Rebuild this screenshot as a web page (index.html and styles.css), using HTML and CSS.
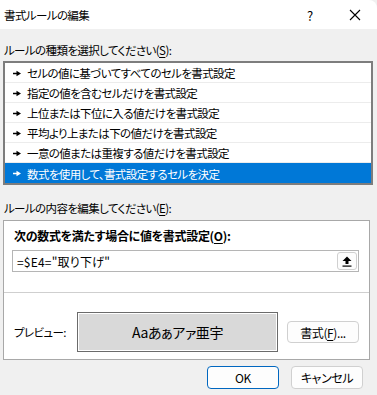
FILE: index.html
```html
<!DOCTYPE html>
<html lang="ja">

<head>
  <meta charset="UTF-8">
  <meta name="viewport" content="width=device-width, initial-scale=1.0">
  <title>書式ルールの編集</title>
  <link rel="stylesheet" href="styles.css">
</head>

<body>
  <div class="window">
    <div class="titlebar">
      <span class="title">書式ルールの編集</span>
      <span class="help">?</span>
      <span class="close">
        <svg width="12" height="12" viewBox="0 0 12 12">
          <path d="M1 1L11 11M11 1L1 11" stroke="#000" stroke-width="1.1" fill="none" />
        </svg>
      </span>
    </div>

    <div class="body">
      <div class="section-label">ルールの種類を選択してください(<u>S</u>):</div>

      <div class="listbox">
        <div class="rule">
          <svg class="arrow" width="8" height="7" viewBox="0 0 8 7"><path d="M0 2.7h3.5V0.7L8 3.5L3.5 6.3V4.3H0z" /></svg>
          セルの値に基づいてすべてのセルを書式設定
        </div>
        <div class="rule">
          <svg class="arrow" width="8" height="7" viewBox="0 0 8 7"><path d="M0 2.7h3.5V0.7L8 3.5L3.5 6.3V4.3H0z" /></svg>
          指定の値を含むセルだけを書式設定
        </div>
        <div class="rule">
          <svg class="arrow" width="8" height="7" viewBox="0 0 8 7"><path d="M0 2.7h3.5V0.7L8 3.5L3.5 6.3V4.3H0z" /></svg>
          上位または下位に入る値だけを書式設定
        </div>
        <div class="rule">
          <svg class="arrow" width="8" height="7" viewBox="0 0 8 7"><path d="M0 2.7h3.5V0.7L8 3.5L3.5 6.3V4.3H0z" /></svg>
          平均より上または下の値だけを書式設定
        </div>
        <div class="rule">
          <svg class="arrow" width="8" height="7" viewBox="0 0 8 7"><path d="M0 2.7h3.5V0.7L8 3.5L3.5 6.3V4.3H0z" /></svg>
          一意の値または重複する値だけを書式設定
        </div>
        <div class="rule selected">
          <svg class="arrow" width="8" height="7" viewBox="0 0 8 7"><path d="M0 2.7h3.5V0.7L8 3.5L3.5 6.3V4.3H0z" /></svg>
          数式を使用して、書式設定するセルを決定
        </div>
      </div>

      <div class="section-label second">ルールの内容を編集してください(<u>E</u>):</div>

      <div class="editbox">
        <div class="formula-area">
          <div class="formula-label">次の数式を満たす場合に値を書式設定(<u>O</u>):</div>
          <div class="formula-input">
            <span class="formula-text">=$E4="取り下げ"</span>
            <span class="collapse-btn">
              <svg width="10" height="11" viewBox="0 0 10 11">
                <path d="M5 0.5L9.5 5H6.5V8H3.5V5H0.5z" fill="#000" />
                <rect x="0.5" y="9.5" width="9" height="1.2" fill="#000" />
              </svg>
            </span>
          </div>
        </div>

        <div class="preview-row">
          <span class="preview-label">プレビュー:</span>
          <div class="preview-box">
            <div class="preview-inner">Aaあぁアァ亜宇</div>
          </div>
          <button class="btn format-btn">書式(<u>F</u>)...</button>
        </div>
      </div>

      <div class="footer">
        <button class="btn ok">OK</button>
        <button class="btn">キャンセル</button>
      </div>
    </div>
  </div>
</body>

</html>
```

FILE: styles.css
```css
body {
  margin: 0;
  font-family: "Noto Sans CJK JP", "Noto Sans", sans-serif;
  font-size: 11.5px;
  letter-spacing: -0.6px;
  font-feature-settings: "palt";
  color: #000;
  background-color: #f0f0f0;
}

.window {
  width: 377px;
  height: 395px;
  display: flex;
  flex-direction: column;
  overflow: hidden;
}

.titlebar {
  height: 29px;
  background-color: #ffffff;
  display: flex;
  align-items: center;
  padding-left: 4px;
  padding-top: 1px;
  box-sizing: border-box;
  border-top-right-radius: 8px;
}

.title {
  flex: 1;
}

.help {
  width: 14px;
  text-align: center;
  font-size: 13px;
  letter-spacing: 0;
  margin-right: 32px;
}

.close {
  display: flex;
  width: 12px;
  margin-right: 16px;
}

.body {
  flex: 1;
  padding: 0 4px 0 3px;
  display: flex;
  flex-direction: column;
}

.section-label {
  height: 32px;
  display: flex;
  align-items: flex-end;
  padding-bottom: 3px;
  box-sizing: border-box;
  padding-left: 1px;
}

.section-label.second {
  height: 35px;
  padding-bottom: 4px;
}

u {
  text-decoration-thickness: 1px;
  text-underline-offset: 2px;
}

.listbox {
  width: 370px;
  height: 124px;
  box-sizing: border-box;
  border: 2px solid #7d7d7d;
  background-color: #ffffff;
}

.rule {
  height: 20px;
  box-sizing: border-box;
  border-bottom: 1px solid #ececec;
  display: flex;
  align-items: center;
  padding-left: 8px;
  padding-top: 1px;
  white-space: nowrap;
}

.rule .arrow {
  margin-right: 6px;
  fill: #000;
}

.rule.selected {
  background-color: #0078d7;
  color: #ffffff;
  border-bottom: none;
}

.rule.selected .arrow {
  fill: #ffffff;
}

.editbox {
  width: 367px;
  height: 140px;
  box-sizing: border-box;
  border: 1px solid #a8a8a8;
  background-color: #ffffff;
  display: flex;
  flex-direction: column;
}

.formula-area {
  padding: 6px 10px 0 8px;
  height: 72px;
  box-sizing: border-box;
  border-bottom: 1px solid #cfcfcf;
}

.formula-label {
  font-weight: bold;
  font-size: 12px;
  letter-spacing: -0.3px;
  height: 18px;
  line-height: 18px;
  padding-left: 2px;
}

.formula-input {
  margin-top: 5px;
  height: 22px;
  box-sizing: border-box;
  border: 1px solid #b5b5b5;
  display: flex;
  align-items: center;
  justify-content: space-between;
  padding: 0 1px 0 4px;
}

.formula-text {
  font-size: 12px;
  letter-spacing: 0.2px;
}

.collapse-btn {
  width: 20px;
  height: 18px;
  box-sizing: border-box;
  border: 1px solid #d0d0d0;
  border-radius: 3px;
  background-color: #fdfdfd;
  display: flex;
  align-items: center;
  justify-content: center;
}

.preview-row {
  flex: 1;
  display: flex;
  align-items: center;
  padding: 12px 10px 0 9px;
}

.preview-label {
  width: 63px;
  padding-left: 1px;
}

.preview-box {
  width: 201px;
  height: 40px;
  box-sizing: border-box;
  border: 1px solid #6b6b6b;
  padding: 1px;
  background-color: #ffffff;
}

.preview-inner {
  height: 100%;
  background-color: #d9d9d9;
  display: flex;
  align-items: center;
  justify-content: center;
  font-size: 14px;
  letter-spacing: -0.4px;
}

.btn {
  font-family: inherit;
  font-size: 12px;
  letter-spacing: -0.4px;
  font-feature-settings: "palt";
  color: #000;
  background-color: #fdfdfd;
  border: 1px solid #d0d0d0;
  border-radius: 4px;
  width: 72px;
  height: 23px;
  padding: 0;
}

.format-btn {
  margin-left: auto;
  height: 22px;
}

.footer {
  display: flex;
  justify-content: flex-end;
  gap: 12px;
  padding: 6px 10px 0 0;
}

.btn.ok {
  border-color: #0067c0;
}
```
